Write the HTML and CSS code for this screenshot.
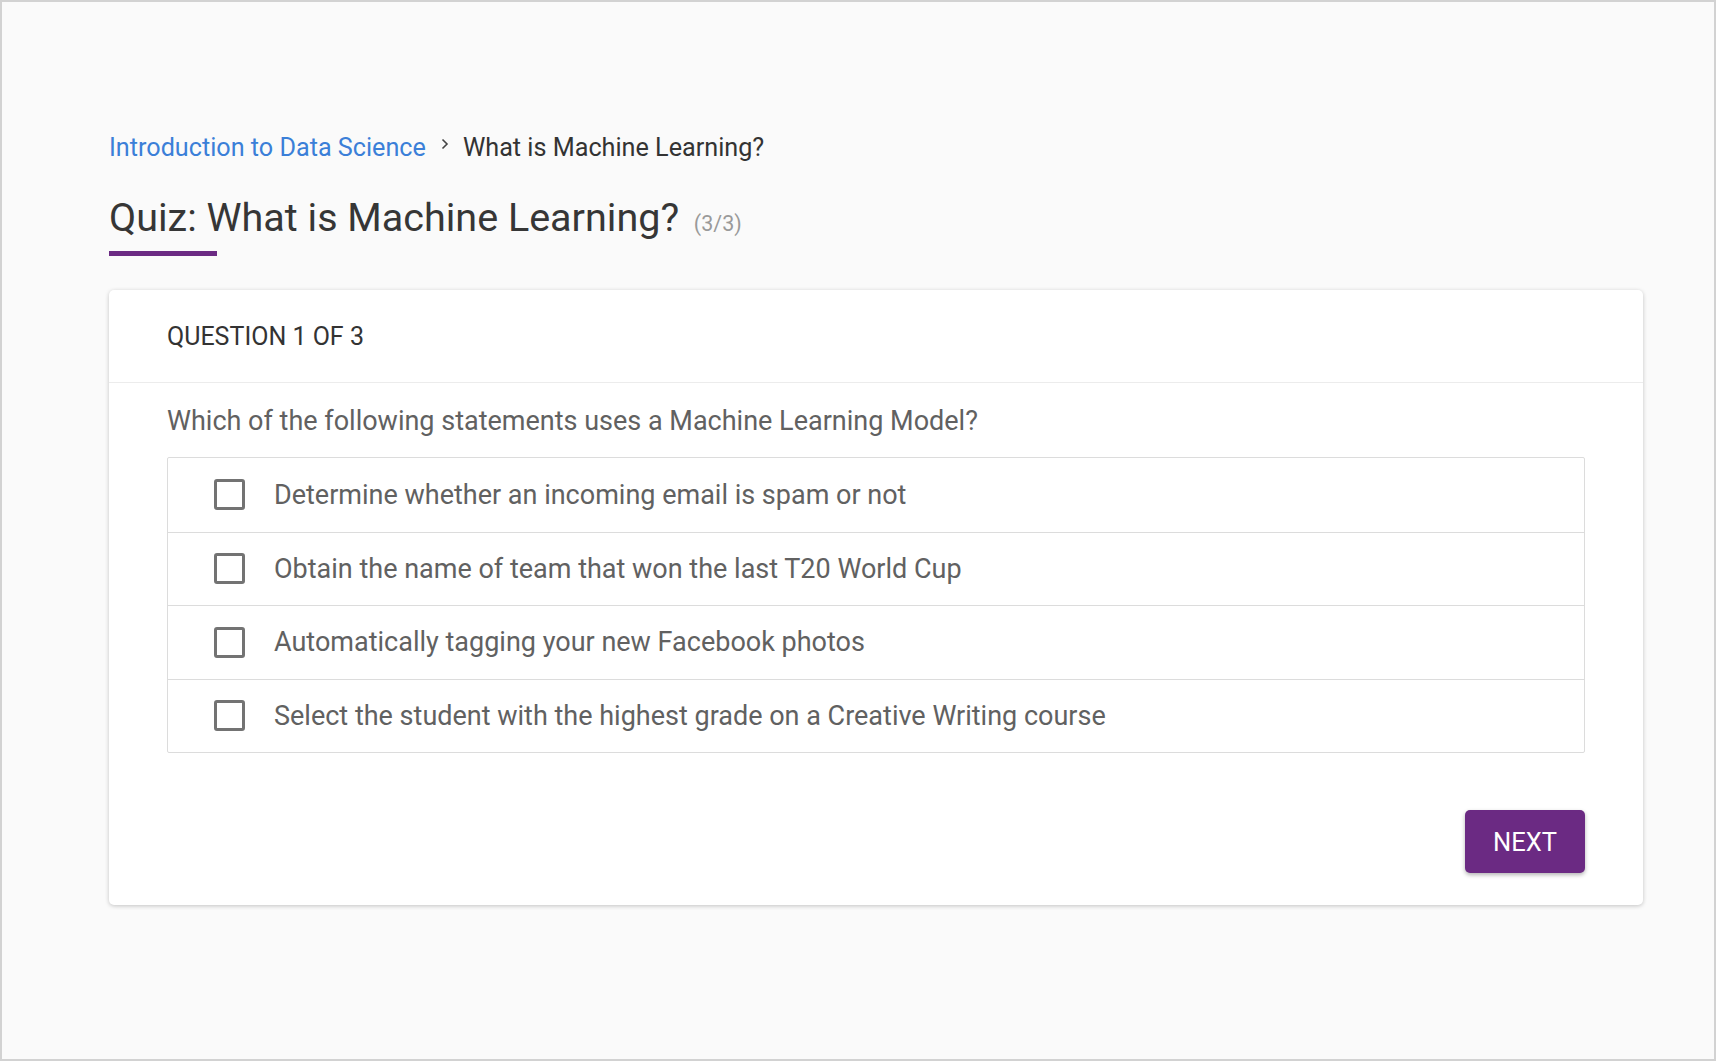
FILE: index.html
```html
<!DOCTYPE html>
<html lang="en">
<head>
<meta charset="utf-8">
<title>Quiz: What is Machine Learning?</title>
<link rel="stylesheet" href="styles.css">
</head>
<body>
<div class="frame">
  <div class="page">
    <nav class="breadcrumb">
      <a class="crumb-link" href="#">Introduction to Data Science</a>
      <svg class="chev" width="8" height="12" viewBox="0 0 8 12"><path d="M1.5 1.5 L6 6 L1.5 10.5" fill="none" stroke="#444" stroke-width="1.6"/></svg>
      <span class="crumb-current">What is Machine Learning?</span>
    </nav>
    <h1 class="title">Quiz: What is Machine Learning? <span class="count">(3/3)</span></h1>
    <div class="title-bar"></div>

    <section class="card">
      <header class="card-head">QUESTION 1 OF 3</header>
      <div class="card-body">
        <p class="question">Which of the following statements uses a Machine Learning Model?</p>
        <div class="options">
          <label class="option"><span class="box"></span><span class="opt-text">Determine whether an incoming email is spam or not</span></label>
          <label class="option"><span class="box"></span><span class="opt-text">Obtain the name of team that won the last T20 World Cup</span></label>
          <label class="option"><span class="box"></span><span class="opt-text">Automatically tagging your new Facebook photos</span></label>
          <label class="option"><span class="box"></span><span class="opt-text">Select the student with the highest grade on a Creative Writing course</span></label>
        </div>
        <div class="actions">
          <button class="next">NEXT</button>
        </div>
      </div>
    </section>
  </div>
</div>
</body>
</html>
```

FILE: styles.css
```css
* { box-sizing: border-box; }
html, body { margin: 0; padding: 0; }
body {
  font-family: Roboto, "Noto Sans", "Liberation Sans", sans-serif;
  background: #fafafa;
}
.frame {
  height: 1061px;
  border: 2px solid #d2d2d2;
  background: #fafafa;
}
.page {
  padding: 130px 71px 0 107px;
}
.breadcrumb {
  display: flex;
  align-items: center;
  height: 30px;
  font-size: 25.2px;
}
.crumb-link {
  color: #3b7fd8;
  text-decoration: none;
}
.chev {
  margin: -6px 14px 0 15px;
}
.crumb-current {
  color: #333;
}
.title {
  margin: 34px 0 0 0;
  font-weight: 400;
  font-size: 39.5px;
  line-height: 44px;
  color: #363636;
}
.count {
  font-size: 21.5px;
  color: #9a9a9a;
  margin-left: 5px;
}
.title-bar {
  width: 108px;
  height: 5px;
  background: #6b2a83;
  margin-top: 5px;
}
.card {
  margin-top: 34px;
  background: #fff;
  border-radius: 5px;
  box-shadow: 0 1px 4px rgba(0,0,0,0.22);
}
.card-head {
  height: 93px;
  display: flex;
  align-items: center;
  padding: 0 58px;
  font-size: 25px;
  color: #333;
  border-bottom: 1px solid #ececec;
}
.card-body {
  padding: 22px 58px 32px 58px;
}
.question {
  margin: 0;
  font-size: 27px;
  line-height: 32px;
  color: #616161;
}
.options {
  margin-top: 20px;
  border: 1px solid #dcdcdc;
  border-radius: 2px;
}
.option {
  display: flex;
  align-items: center;
  height: 73.5px;
  padding-left: 46px;
  border-top: 1px solid #dcdcdc;
}
.option:first-child { border-top: none; }
.box {
  width: 31px;
  height: 31px;
  border: 3px solid #737373;
  border-radius: 3px;
  flex: none;
}
.opt-text {
  margin-left: 29px;
  font-size: 27px;
  color: #616161;
}
.actions {
  display: flex;
  justify-content: flex-end;
  margin-top: 57px;
}
.next {
  width: 120px;
  height: 63px;
  border: none;
  border-radius: 5px;
  background: #6b2a83;
  color: #fff;
  font-family: Roboto, "Liberation Sans", sans-serif;
  font-size: 25.5px;
  box-shadow: 0 2px 4px rgba(0,0,0,0.3);
}
```
